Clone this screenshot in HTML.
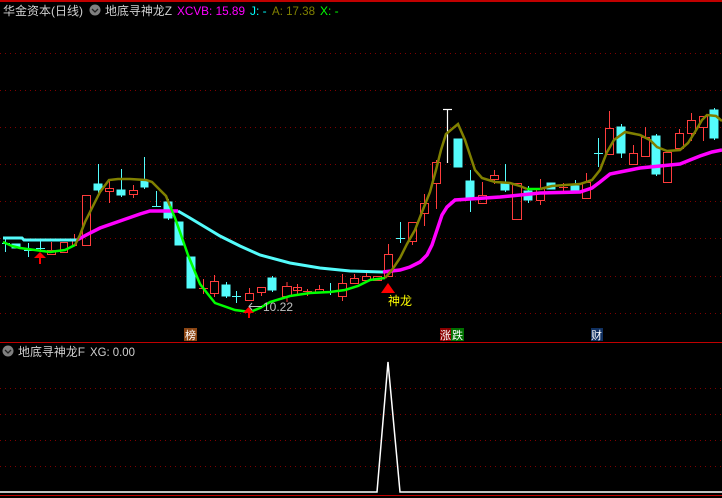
<!DOCTYPE html>
<html><head><meta charset="utf-8"><style>
html,body{margin:0;padding:0;background:#000;width:722px;height:498px;overflow:hidden}
svg{display:block}
text{font-family:"Liberation Sans","Noto Sans CJK SC",sans-serif}
</style></head><body>
<svg width="722" height="498" viewBox="0 0 722 498" xmlns="http://www.w3.org/2000/svg">
<rect width="722" height="498" fill="#000"/>
<rect x="0" y="0" width="722" height="2" fill="#c00000"/>
<g stroke="#800000" stroke-width="1" stroke-dasharray="1,4">
<line x1="0" y1="53.5" x2="722" y2="53.5"/><line x1="0" y1="90.5" x2="722" y2="90.5"/>
<line x1="0" y1="127.5" x2="722" y2="127.5"/><line x1="0" y1="164.5" x2="722" y2="164.5"/>
<line x1="0" y1="201.5" x2="722" y2="201.5"/><line x1="0" y1="238.5" x2="722" y2="238.5"/>
<line x1="0" y1="276.5" x2="722" y2="276.5"/><line x1="0" y1="313.5" x2="722" y2="313.5"/>
<line x1="0" y1="388.5" x2="722" y2="388.5"/><line x1="0" y1="414.5" x2="722" y2="414.5"/>
<line x1="0" y1="440.5" x2="722" y2="440.5"/><line x1="0" y1="466.5" x2="722" y2="466.5"/>
</g>
<rect x="0" y="342" width="722" height="1" fill="#c00000"/>
<rect x="0" y="495" width="722" height="1" fill="#c00000"/>

<g fill="#54fcfc" stroke="#54fcfc" stroke-width="1">
<line x1="5.5" y1="238" x2="5.5" y2="252"/><line x1="2" y1="243.5" x2="10" y2="243.5"/>
<rect x="12" y="244" width="8" height="4"/>
<line x1="28.5" y1="243" x2="28.5" y2="257"/><line x1="24" y1="250.5" x2="33" y2="250.5"/>
<line x1="40.5" y1="240" x2="40.5" y2="250"/><line x1="36" y1="248.5" x2="45" y2="248.5"/>
<line x1="98.5" y1="164" x2="98.5" y2="193"/><rect x="94" y="184" width="8" height="6"/>
<line x1="121.5" y1="169" x2="121.5" y2="197"/><rect x="117" y="190" width="8" height="5"/>
<line x1="144.5" y1="157" x2="144.5" y2="189"/><rect x="141" y="181" width="7" height="6"/>
<line x1="156.5" y1="191" x2="156.5" y2="207"/><line x1="152" y1="206.5" x2="161" y2="206.5"/>
<rect x="164" y="202" width="8" height="16"/><line x1="168.5" y1="199" x2="168.5" y2="220"/>
<rect x="175" y="222" width="8" height="23"/>
<rect x="187" y="257" width="8" height="31"/>
<rect x="222" y="285" width="8" height="11"/><line x1="226.5" y1="282" x2="226.5" y2="298"/>
<line x1="236.5" y1="291" x2="236.5" y2="303"/><line x1="232" y1="296.5" x2="241" y2="296.5"/>
<rect x="268" y="278" width="8" height="12"/><line x1="272.5" y1="276" x2="272.5" y2="292"/>
<line x1="330.5" y1="283" x2="330.5" y2="295"/><line x1="326" y1="291.5" x2="335" y2="291.5"/>
<line x1="400.5" y1="222" x2="400.5" y2="243"/><line x1="396" y1="238.5" x2="405" y2="238.5"/>
<rect x="454" y="139" width="8" height="28"/>
<rect x="466" y="181" width="8" height="17"/><line x1="470.5" y1="170" x2="470.5" y2="212"/>
<rect x="501" y="184" width="8" height="6"/><line x1="505.5" y1="164" x2="505.5" y2="192"/>
<rect x="524" y="191" width="8" height="9"/><line x1="528.5" y1="186" x2="528.5" y2="203"/>
<rect x="547" y="183" width="8" height="6"/>
<rect x="571" y="186" width="8" height="4"/><line x1="575.5" y1="180" x2="575.5" y2="192"/>
<line x1="598.5" y1="138" x2="598.5" y2="167"/><line x1="594" y1="153.5" x2="603" y2="153.5"/>
<rect x="617" y="127" width="8" height="26"/><line x1="621.5" y1="124" x2="621.5" y2="158"/>
<rect x="652" y="136" width="8" height="38"/><line x1="656.5" y1="134" x2="656.5" y2="176"/>
<rect x="710" y="110" width="8" height="28"/><line x1="714.5" y1="108" x2="714.5" y2="140"/>
</g>
<g fill="none" stroke="#ff3c3c" stroke-width="1">
<rect x="47.5" y="250.5" width="8" height="4"/><line x1="51.5" y1="242" x2="51.5" y2="250"/>
<rect x="60.5" y="242.5" width="7" height="10"/>
<rect x="72.5" y="240.5" width="4" height="5"/><line x1="74.5" y1="234" x2="74.5" y2="240"/>
<rect x="82.5" y="195.5" width="8" height="50"/>
<rect x="105.5" y="188.5" width="8" height="3"/><line x1="109.5" y1="180" x2="109.5" y2="188"/><line x1="109.5" y1="192" x2="109.5" y2="203"/>
<rect x="129.5" y="190.5" width="8" height="4"/><line x1="133.5" y1="185" x2="133.5" y2="190"/><line x1="133.5" y1="195" x2="133.5" y2="198"/>
<line x1="203.5" y1="279" x2="203.5" y2="294"/><line x1="199" y1="288.5" x2="208" y2="288.5"/>
<rect x="210.5" y="281.5" width="8" height="12"/><line x1="214.5" y1="275" x2="214.5" y2="281"/><line x1="214.5" y1="294" x2="214.5" y2="297"/>
<rect x="245.5" y="293.5" width="8" height="7"/><line x1="249.5" y1="288" x2="249.5" y2="293"/>
<rect x="257.5" y="287.5" width="8" height="5"/><line x1="261.5" y1="293" x2="261.5" y2="296"/>
<rect x="282.5" y="286.5" width="9" height="10"/><line x1="287" y1="282" x2="287" y2="286"/><line x1="287" y1="297" x2="287" y2="302"/>
<rect x="293.5" y="287.5" width="8" height="3"/><line x1="297.5" y1="284" x2="297.5" y2="294"/>
<line x1="307.5" y1="289" x2="307.5" y2="296"/><line x1="303" y1="291.5" x2="312" y2="291.5"/>
<rect x="315.5" y="289.5" width="8" height="3"/><line x1="319.5" y1="285" x2="319.5" y2="289"/>
<rect x="338.5" y="283.5" width="8" height="13"/><line x1="342.5" y1="274" x2="342.5" y2="283"/><line x1="342.5" y1="297" x2="342.5" y2="301"/>
<rect x="350.5" y="278.5" width="8" height="5"/><line x1="354.5" y1="274" x2="354.5" y2="278"/>
<rect x="362.5" y="276.5" width="8" height="4"/><line x1="366.5" y1="273" x2="366.5" y2="276"/>
<rect x="373.5" y="276.5" width="8" height="4"/>
<rect x="384.5" y="254.5" width="8" height="22"/><line x1="388.5" y1="244" x2="388.5" y2="254"/>
<rect x="408.5" y="222.5" width="8" height="19"/><line x1="412.5" y1="241" x2="412.5" y2="245"/>
<rect x="420.5" y="203.5" width="8" height="10"/><line x1="424.5" y1="194" x2="424.5" y2="203"/><line x1="424.5" y1="214" x2="424.5" y2="226"/>
<rect x="432.5" y="162.5" width="8" height="21"/><line x1="436.5" y1="160" x2="436.5" y2="162"/><line x1="436.5" y1="184" x2="436.5" y2="209"/>
<rect x="478.5" y="195.5" width="8" height="8"/><line x1="482.5" y1="182" x2="482.5" y2="195"/>
<rect x="490.5" y="175.5" width="8" height="4"/><line x1="494.5" y1="170" x2="494.5" y2="175"/><line x1="494.5" y1="180" x2="494.5" y2="184"/>
<rect x="512.5" y="183.5" width="9" height="36"/>
<rect x="536.5" y="188.5" width="8" height="12"/><line x1="540.5" y1="179" x2="540.5" y2="188"/><line x1="540.5" y1="201" x2="540.5" y2="205"/>
<line x1="563.5" y1="183" x2="563.5" y2="191"/><line x1="559" y1="187.5" x2="568" y2="187.5"/>
<rect x="582.5" y="182.5" width="8" height="16"/><line x1="586.5" y1="173" x2="586.5" y2="182"/>
<rect x="605.5" y="128.5" width="8" height="26"/><line x1="609.5" y1="111" x2="609.5" y2="128"/>
<rect x="629.5" y="153.5" width="8" height="11"/><line x1="633.5" y1="145" x2="633.5" y2="153"/>
<rect x="641.5" y="137.5" width="8" height="19"/><line x1="645.5" y1="127" x2="645.5" y2="137"/>
<rect x="663.5" y="152.5" width="8" height="30"/>
<rect x="675.5" y="133.5" width="8" height="15"/><line x1="679.5" y1="129" x2="679.5" y2="133"/>
<rect x="687.5" y="120.5" width="8" height="13"/><line x1="691.5" y1="113" x2="691.5" y2="120"/><line x1="691.5" y1="134" x2="691.5" y2="141"/>
<rect x="699.5" y="116.5" width="8" height="11"/><line x1="703.5" y1="128" x2="703.5" y2="141"/>
</g>
<g stroke="#fff" stroke-width="1.2"><line x1="447.5" y1="109" x2="447.5" y2="163"/><line x1="443" y1="109.5" x2="452" y2="109.5"/></g>

<polyline fill="none" stroke="#54fcfc" stroke-width="3" points="3,238 22,238 24,240 77,240"/>
<polyline fill="none" stroke="#54fcfc" stroke-width="3" points="178,211 190,218 200,224 210,230 220,236 240,246 260,255 290,263 320,268 350,271 383,272"/>
<polyline fill="none" stroke="#ff00ff" stroke-width="3.5" points="77,240 90,233 100,228 120,221 140,214 150,211 178,211"/>
<polyline fill="none" stroke="#ff00ff" stroke-width="3.5" points="383,272 400,270 410,267 420,262 427,255 432,245 437,230 442,215 447,207 455,200 470,199 500,197 540,193 580,192 592,188 600,182 610,174 620,172 640,168 660,166 680,164 690,160 700,156 712,152 722,150"/>
<polyline fill="none" stroke="#00ff00" stroke-width="2.5" points="3,242 12,246 20,248 35,250 50,252 65,250 75,245"/>
<polyline fill="none" stroke="#00ff00" stroke-width="2.5" points="170,206 175,218 180,232 188,255 195,272 200,284 207,293 215,303 235,310 250,312 260,308 270,302 290,296 310,293 330,292 345,290 358,286 370,280 385,278"/>
<polyline fill="none" stroke="#00ff00" stroke-width="2.5" points="527,189 540,189"/>
<polyline fill="none" stroke="#808000" stroke-width="2.5" points="75,245 80,235 85,222 92,208 100,192 109,180 118,179 130,179 146,180 152,182 160,190 166,196 170,206"/>
<polyline fill="none" stroke="#808000" stroke-width="2.5" points="385,278 392,270 400,258 407,244 415,230 422,212 430,192 436,170 441,150 446,134 458,124 465,140 470,155 475,170 482,178 495,182 510,183 520,186 527,189"/>
<polyline fill="none" stroke="#808000" stroke-width="2.5" points="540,189 552,186 565,185 580,184 592,180 600,170 607,152 614,140 625,132 640,135 650,140 657,147 667,151 680,150 688,143 695,132 702,120 707,115 716,116 722,121"/>

<g fill="#ff0000">
<polygon points="34,258 40,252 46,258"/><rect x="39" y="257" width="2" height="7"/>
<polygon points="243,313 248.5,307 254,313"/><rect x="248" y="312" width="2" height="6"/>
<polygon points="381,293 388,283 395,293"/>
</g>
<line x1="249" y1="306.5" x2="262" y2="306.5" stroke="#c0c0c0" stroke-width="1"/>
<polyline fill="none" stroke="#c0c0c0" points="252,303 249,306.5 252,310"/>
<text x="263" y="311" font-size="12" fill="#c0c0c0">10.22</text>
<text x="388" y="305" font-size="12" fill="#ffff00">神龙</text>

<rect x="184" y="328" width="13" height="13" fill="#8b4513"/>
<text x="185" y="339" font-size="11" fill="#fff">榜</text>
<rect x="440" y="328" width="11" height="13" fill="#8b0000"/>
<rect x="451" y="328" width="13" height="13" fill="#007000"/>
<text x="440" y="339" font-size="11" fill="#fff">涨</text><text x="452" y="339" font-size="11" fill="#fff">跌</text>
<rect x="591" y="328" width="12" height="13" fill="#103060"/>
<text x="591" y="339" font-size="11" fill="#fff">财</text>

<text x="3" y="15" font-size="12" fill="#d0d0d0" textLength="80" lengthAdjust="spacingAndGlyphs">华金资本(日线)</text>
<circle cx="95" cy="10" r="5.5" fill="#808080"/><polyline points="92,9 95,12 98,9" fill="none" stroke="#222" stroke-width="1.3"/>
<text x="105" y="15" font-size="12" fill="#d0d0d0" textLength="67" lengthAdjust="spacingAndGlyphs">地底寻神龙Z</text>
<text x="177" y="15" font-size="12" fill="#ff00ff" textLength="68" lengthAdjust="spacingAndGlyphs">XCVB: 15.89</text>
<text x="250" y="15" font-size="12" fill="#00ffff">J: -</text>
<text x="272" y="15" font-size="12" fill="#808000" textLength="43" lengthAdjust="spacingAndGlyphs">A: 17.38</text>
<text x="320" y="15" font-size="12" fill="#00ff00">X: -</text>

<circle cx="8" cy="351" r="5.5" fill="#808080"/><polyline points="5,350 8,353 11,350" fill="none" stroke="#222" stroke-width="1.3"/>
<text x="18" y="356" font-size="12" fill="#d0d0d0" textLength="67" lengthAdjust="spacingAndGlyphs">地底寻神龙F</text>
<text x="90" y="356" font-size="12" fill="#d0d0d0" textLength="45" lengthAdjust="spacingAndGlyphs">XG: 0.00</text>

<polyline fill="none" stroke="#fff" stroke-width="1.5" points="0,492 377,492 388,362 400,492 722,492"/>
</svg>
</body></html>
